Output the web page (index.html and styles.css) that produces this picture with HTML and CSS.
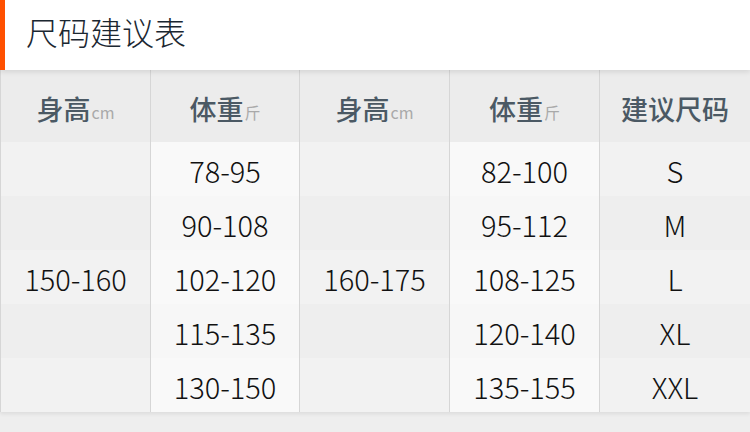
FILE: index.html
```html
<!DOCTYPE html>
<html lang="zh-CN">
<head>
<meta charset="utf-8">
<title>尺码建议表</title>
<link rel="stylesheet" href="styles.css">
</head>
<body>
<div class="page">
  <header class="title-bar">
    <h1 class="title">尺码建议表</h1>
  </header>
  <section class="size-table">
    <div class="cell head">身高<small>cm</small></div>
    <div class="cell head">体重<small>斤</small></div>
    <div class="cell head">身高<small>cm</small></div>
    <div class="cell head">体重<small>斤</small></div>
    <div class="cell head">建议尺码</div>

    <div class="cell merged c1">150-160</div>
    <div class="cell weight c2 r1">78-95</div>
    <div class="cell merged c3">160-175</div>
    <div class="cell weight c4 r1">82-100</div>
    <div class="cell size c5 r1">S</div>

    <div class="cell weight c2 r2 even">90-108</div>
    <div class="cell weight c4 r2 even">95-112</div>
    <div class="cell size c5 r2">M</div>

    <div class="cell weight c2 r3">102-120</div>
    <div class="cell weight c4 r3">108-125</div>
    <div class="cell size c5 r3">L</div>

    <div class="cell weight c2 r4 even">115-135</div>
    <div class="cell weight c4 r4 even">120-140</div>
    <div class="cell size c5 r4">XL</div>

    <div class="cell weight c2 r5">130-150</div>
    <div class="cell weight c4 r5">135-155</div>
    <div class="cell size c5 r5">XXL</div>
  </section>
</div>
</body>
</html>
```

FILE: styles.css
```css
html, body {
  margin: 0;
  padding: 0;
}

body {
  background: #eeeeee;
  font-family: "Noto Sans CJK SC", "Noto Sans", sans-serif;
  width: 750px;
  height: 432px;
  overflow: hidden;
}

.page {
  display: flex;
  flex-direction: column;
}

.title-bar {
  position: relative;
  z-index: 2;
  height: 70px;
  background: #ffffff;
  border-left: 5px solid #ff5000;
  box-sizing: border-box;
  display: flex;
  align-items: center;
  padding-left: 21px;
  padding-bottom: 8px;
  box-shadow: 0 2px 5px rgba(0, 0, 0, 0.10);
}

.title {
  margin: 0;
  font-size: 32px;
  font-weight: 300;
  color: #1b2731;
  line-height: 1;
}

.size-table {
  position: relative;
  z-index: 1;
  display: grid;
  grid-template-columns: 150px 149px 150px 150px 151px;
  grid-template-rows: 72px repeat(5, 54px);
  background:
    repeating-linear-gradient(to bottom,
      #f2f2f2 0 54px,
      #eeeeee 54px 108px);
  background-position: 0 72px;
  box-shadow: 0 2px 4px rgba(0, 0, 0, 0.08);
}

.cell {
  display: flex;
  align-items: center;
  justify-content: center;
  border-left: 1px solid #d6d6d6;
  font-size: 29px;
  font-weight: 300;
  color: #111111;
  padding-top: 2px;
  box-sizing: border-box;
}

.head {
  background: #ececec;
  color: #4b5964;
  font-weight: 500;
  font-size: 27px;
  padding-top: 4px;
}

.head small {
  font-size: 16px;
  font-weight: 400;
  color: #a9a9a9;
  margin-left: 1px;
  align-self: center;
  padding-top: 8px;
}

.merged {
  grid-row: 2 / 7;
  background: transparent;
}

.c1 { grid-column: 1; }
.c2 { grid-column: 2; }
.c3 { grid-column: 3; }
.c4 { grid-column: 4; }
.c5 { grid-column: 5; }

.r1 { grid-row: 2; }
.r2 { grid-row: 3; }
.r3 { grid-row: 4; }
.r4 { grid-row: 5; }
.r5 { grid-row: 6; }

.weight {
  background: rgba(255, 255, 255, 0.5);
}

.size {
  background: transparent;
}
```
